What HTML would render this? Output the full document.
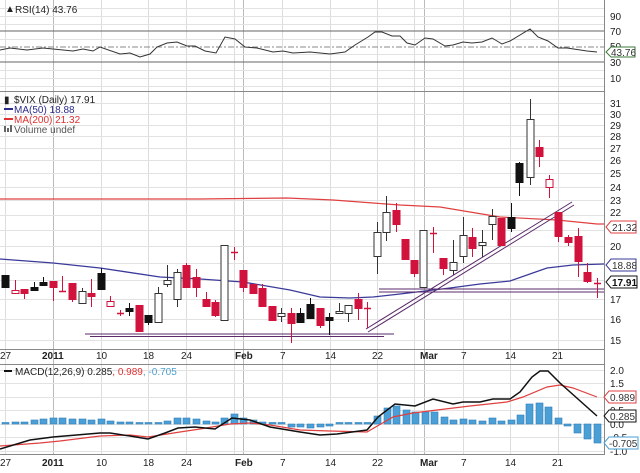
<!DOCTYPE html>
<html><head><meta charset="utf-8"><style>
html,body{margin:0;padding:0;background:#fff;width:640px;height:473px;overflow:hidden}
svg{display:block}
text{font-family:"Liberation Sans",sans-serif;font-size:10px;fill:#222}
</style></head><body>
<svg id="s" width="640" height="473" viewBox="0 0 640 473" xmlns="http://www.w3.org/2000/svg">
<rect width="640" height="473" fill="#fff"/>
<g id="grid"></g>
<!-- RSI -->
<line x1="0" y1="31" x2="604" y2="31" stroke="#666" stroke-width="1"/>
<line x1="0" y1="62" x2="604" y2="62" stroke="#666" stroke-width="1"/>
<line x1="0" y1="47" x2="604" y2="47" stroke="#888" stroke-dasharray="6,2,2,2"/>
<polyline fill="none" stroke="#333" stroke-width="1" points="0,50 10,48 27,50 43,48 73,51 83,49 93,51 100,47 120,54 130,53 140,57 150,54 157,47 167,43 177,42 187,46 195,46 205,51 216,53 225,37 235,39 245,47 257,48 273,52 283,51 293,53 310,52 320,53 330,54 345,52 355,45 368,37 375,32 382,32 392,36 400,36 407,43 415,45 425,38 433,39 445,46 453,45 463,42 472,43 482,42 492,38 502,44 510,41 530,29 538,37 548,41 558,48 567,48 587,51 597,52"/>
<text x="5" y="12" font-size="10">▲</text>
<text x="15" y="13">RSI(14) 43.76</text>
<g font-size="10"><text x="610" y="20">90</text><text x="610" y="35">70</text><text x="610" y="50">50</text><text x="610" y="66">30</text><text x="610" y="82">10</text></g>
<path d="M606,52 L611,47 L635,47 L635,57 L611,57 Z" fill="#fff" stroke="#3a7a3a"/>
<text x="611" y="56" style="fill:#333">43.76</text>
<!-- panel borders -->
<line x1="0" y1="91.5" x2="604" y2="91.5" stroke="#888"/>
<line x1="0" y1="349.5" x2="604" y2="349.5" stroke="#888"/>
<line x1="0" y1="364.5" x2="604" y2="364.5" stroke="#888"/>
<line x1="0" y1="454.5" x2="604" y2="454.5" stroke="#888"/>
<line x1="604.5" y1="0" x2="604.5" y2="455" stroke="#888"/>
<!-- MAs -->
<polyline fill="none" stroke="#e04040" stroke-width="1.2" points="0,199 100,199 200,199 287,198 333,200 373,203 400,205 420,206 440,207 500,217 557,220 597,224 604,224"/>
<polyline fill="none" stroke="#3a3a9a" stroke-width="1.3" points="0,259 53,263 100,268 160,277 200,279 243,282 290,290 320,297 350,298 373,297 400,294 450,288 480,284 510,281 547,268 573,265 604,264"/>
<!-- trend lines -->
<g stroke="#5a2a6a" stroke-width="1">
<line x1="85" y1="334" x2="394" y2="334"/><line x1="90" y1="336.5" x2="384" y2="336.5"/>
<line x1="379" y1="289" x2="604" y2="289"/><line x1="379" y1="292" x2="604" y2="292"/>
<line x1="366" y1="329" x2="572" y2="202"/><line x1="368" y1="332" x2="574" y2="205"/>
</g>
<g id="candles"></g>
<!-- main legend -->
<text x="4" y="103" font-size="9">▮</text>
<text x="14" y="103">$VIX (Daily) 17.91</text>
<line x1="4" y1="109" x2="13" y2="109" stroke="#2c2c8c" stroke-width="2"/>
<text x="14" y="113" style="fill:#2c2c8c">MA(50) 18.88</text>
<line x1="4" y1="119" x2="13" y2="119" stroke="#e03030" stroke-width="2"/>
<text x="14" y="123" style="fill:#e03030">MA(200) 21.32</text>
<rect x="4" y="126" width="2" height="6" fill="#666"/><rect x="7" y="128" width="2" height="4" fill="#666"/><rect x="10" y="125" width="2" height="7" fill="#666"/>
<text x="14" y="133" style="fill:#555">Volume undef</text>
<g id="plabels"></g>
<path d="M606,227 L611,221 L636,221 L636,233 L611,233 Z" fill="#fff" stroke="#e04040"/>
<text x="612" y="231" style="fill:#333">21.32</text>
<path d="M606,265 L611,259 L636,259 L636,271 L611,271 Z" fill="#fff" stroke="#3a3a9a"/>
<text x="612" y="269" style="fill:#333">18.88</text>
<path d="M606,282 L611,276 L637,276 L637,288 L611,288 Z" fill="#fff" stroke="#111"/>
<text x="612" y="286" font-weight="bold" style="fill:#111">17.91</text>
<!-- MACD -->
<g id="hist"></g>
<polyline fill="none" stroke="#e04040" stroke-width="1.2" points="0,446 40,443 60,441 100,436 130,435 148,437 180,432 200,429 230,424 250,423 270,425 300,430 330,431 367,432 393,417 413,413 437,410 470,406 507,402 523,397 547,387 560,385 573,388 597,397"/>
<polyline fill="none" stroke="#111" stroke-width="1.5" points="0,449 30,440 53,437 100,433 110,433 130,436 148,439 165,433 178,428 195,427 215,429 232,418 250,420 270,427 300,432 320,435 337,434 367,430 378,417 395,404 415,406 433,399 453,404 463,402 480,402 493,399 510,399 520,392 532,377 540,371 548,371 560,383 597,416"/>
<line x1="4" y1="371" x2="12" y2="371" stroke="#111" stroke-width="2"/>
<text x="15" y="375">MACD(12,26,9) 0.285<tspan style="fill:#e03030">, 0.989</tspan><tspan style="fill:#4a9fd0">, -0.705</tspan></text>
<g font-size="10"><text x="610" y="374">2.0</text><text x="610" y="387">1.5</text><text x="610" y="414">0.5</text><text x="610" y="428">0.0</text><text x="610" y="441">-0.5</text><text x="610" y="455">-1.0</text></g>
<path d="M604,397 L609,391 L636,391 L636,403 L609,403 Z" fill="#fff" stroke="#e04040"/>
<text x="610" y="401" style="fill:#333">0.989</text>
<path d="M604,416 L609,410 L636,410 L636,422 L609,422 Z" fill="#fff" stroke="#111"/>
<text x="610" y="420" style="fill:#333">0.285</text>
<path d="M604,443 L609,437 L638,437 L638,449 L609,449 Z" fill="#fff" stroke="#4a9fd0"/>
<text x="609" y="447" style="fill:#333">-0.705</text>
<g id="dates"></g>
</svg>
<script>
var NS="http://www.w3.org/2000/svg";
function el(p,t,a,txt){var e=document.createElementNS(NS,t);for(var k in a)e.setAttribute(k,a[k]);if(txt!=null)e.textContent=txt;document.getElementById(p).appendChild(e);return e;}
function py(p){return 1224.2-326.5*Math.log(p);}
// vertical grid
var vl=[[5,0],[53,1],[101,0],[148,0],[186,0],[234,0],[243,1],[282,0],[330,0],[377,0],[414,0],[424,1],[463,0],[510,0],[558,0]];
vl.forEach(function(v){el("grid","line",{x1:v[0]+.5,y1:0,x2:v[0]+.5,y2:455,stroke:v[1]?"#bbb":"#ddd"});});
// rsi horizontal grid
[8,16,24,39,54,70,78,86].forEach(function(y){el("grid","line",{x1:0,y1:y+.5,x2:604,y2:y+.5,stroke:"#e2e2e2"});});
// main horizontal grid
for(var p=15;p<=31;p++){var y=Math.round(py(p))+.5;el("grid","line",{x1:0,y1:y,x2:604,y2:y,stroke:"#e2e2e2"});
 if(p!=18&&p!=19&&p!=21&&p!=22) el("plabels","text",{x:610,y:Math.round(py(p))+4},""+p);}
el("plabels","text",{x:610,y:216},"22");
// macd grid
[370,383,397,410,424,437,451].forEach(function(y){el("grid","line",{x1:0,y1:y+.5,x2:604,y2:y+.5,stroke:"#e2e2e2"});});
var C=[[5,275,275,287,287,'b'],[15,280,290,293,293,'rw'],[24,289,289,293,299,'r'],[34,282,287,290,290,'b'],[43,277,282,285,285,'b'],[53,281,281,287,301,'r'],[62,276,291,292,292,'r'],[72,283,283,299,302,'r'],[82,288,291,303,303,'w'],[91,279,293,296,307,'r'],[101,268,273,289,289,'b'],[110,296,301,306,306,'rw'],[120,310,313,314,316,'r'],[129,303,308,311,316,'b'],[139,305,305,331,331,'r'],[148,315,315,322,325,'b'],[158,287,293,322,322,'w'],[167,265,280,284,287,'w'],[177,269,272,299,307,'w'],[186,263,265,287,287,'r'],[196,269,277,287,297,'r'],[206,292,299,306,306,'r'],[215,300,302,315,317,'r'],[224,245,245,320,320,'w'],[234,247,252,253,260,'r'],[243,270,270,287,292,'r'],[253,284,284,293,293,'r'],[262,284,288,306,306,'r'],[272,306,306,320,320,'r'],[281,308,313,316,322,'w'],[291,308,313,323,343,'r'],[300,308,313,322,322,'b'],[310,298,304,318,318,'b'],[320,308,308,325,328,'r'],[329,313,317,320,335,'b'],[339,303,311,313,313,'w'],[348,305,305,313,322,'w'],[358,293,299,308,320,'r'],[367,302,308,309,328,'r'],[377,222,232,256,274,'w'],[386,196,212,232,241,'w'],[396,203,210,224,232,'r'],[405,239,239,259,259,'r'],[414,260,260,273,277,'r'],[423,230,230,287,287,'w'],[433,227,233,234,253,'r'],[443,258,258,268,275,'r'],[453,240,262,270,275,'w'],[463,217,235,256,263,'w'],[472,228,237,248,257,'r'],[482,230,242,245,257,'w'],[492,209,216,224,240,'w'],[501,218,218,245,245,'r'],[511,203,217,228,232,'b'],[519,162,163,182,196,'b'],[530,99,119,177,185,'w'],[539,140,147,156,167,'r'],[549,175,179,187,198,'rw'],[558,212,212,236,242,'r'],[568,235,237,242,246,'r'],[578,228,236,261,277,'r'],[587,263,272,281,283,'r'],[597,278,283,284,298,'r']];
var RED="#d0123c";
C.forEach(function(c){var x=c[0],t=c[5];var col=(t=='r'||t=='rw')?RED:(t=='b'?"#111":"#333");
 el("candles","line",{x1:x+.5,y1:c[1],x2:x+.5,y2:c[4],stroke:col});
 var h=c[3]-c[2];
 if(h<=1){el("candles","line",{x1:x-3,y1:c[2]+.5,x2:x+4,y2:c[2]+.5,stroke:col,"stroke-width":1.5});}
 else{var f=(t=='r')?RED:(t=='b'?"#111":"#fff");el("candles","rect",{x:x-3,y:c[2]+.5,width:7,height:h,fill:f,stroke:col});}
});
// histogram
var H=[[5,423],[15,422],[24,422],[34,420],[43,419],[53,418],[62,418],[72,419],[82,419],[91,420],[101,419],[110,421],[120,422],[129,422],[139,423],[148,425],[158,423],[167,421],[177,418],[186,418],[196,419],[206,421],[215,422],[224,418],[234,414],[243,418],[253,420],[262,422],[272,424],[281,425],[291,427],[300,427],[310,428],[320,427],[329,426],[339,425],[348,424],[358,424],[367,424],[377,416],[387,408],[396,406],[406,410],[415,412],[425,412],[434,412],[444,417],[453,420],[463,419],[472,420],[482,421],[492,418],[501,421],[511,420],[520,415],[529,404],[539,403],[548,407],[558,418],[567,426],[577,433],[587,439],[597,443]];
H.forEach(function(b){var y0=424,y1=b[1];var top=Math.min(y0,y1),h=Math.abs(y1-y0);if(h<1.5){top=422.5;h=1.5;}
 el("hist","rect",{x:b[0]-3,y:top,width:7,height:h,fill:"#4a9fd6",stroke:"#2f7fb8","stroke-width":.6});});
// dates
var D=[[0,"27",0],[42,"2011",1],[96,"10",0],[143,"18",0],[181,"24",0],[235,"Feb",1],[280,"7",0],[325,"14",0],[372,"22",0],[420,"Mar",1],[461,"7",0],[505,"14",0],[552,"21",0]];
[359,466].forEach(function(y){D.forEach(function(d){var a={x:d[0],y:y};if(d[2])a["font-weight"]="bold";el("dates","text",a,d[1]);});});
</script>
</body></html>
